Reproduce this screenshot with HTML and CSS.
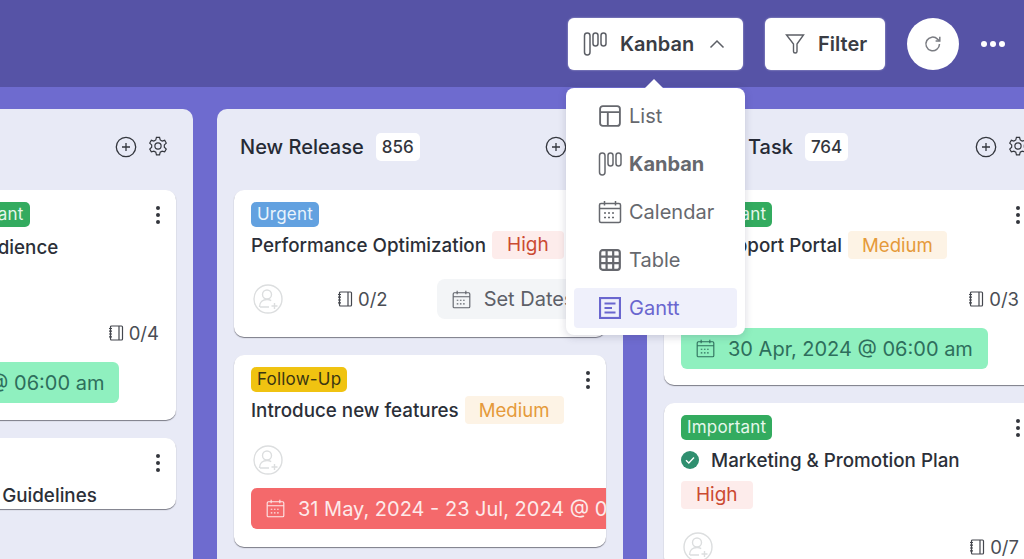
FILE: index.html
```html
<!DOCTYPE html>
<html lang="en">
<head>
    <meta charset="UTF-8">
    <meta name="viewport" content="width=device-width, initial-scale=1.0">
    <title>Project Board</title>
    <link rel="stylesheet" href="styles.css">
</head>
<body>
    <!-- shared icons -->
    <svg class="icon-defs" aria-hidden="true">
        <symbol id="i-kanban" viewBox="0 0 24 24"><rect x="1.5" y="1" width="5.5" height="22" rx="2.7"/><rect x="10" y="1" width="5" height="13" rx="2.5"/><rect x="18" y="1" width="5" height="13" rx="2.5"/></symbol>
        <symbol id="i-list" viewBox="0 0 20 20"><rect x="1" y="1" width="18" height="18" rx="2.5"/><path d="M1 6.5h18M8 6.5V19"/></symbol>
        <symbol id="i-calendar" viewBox="0 0 24 24"><rect x="1.5" y="3.5" width="21" height="19" rx="1.5"/><path d="M1.5 8.5h21M6.5 1v4.5M17.5 1v4.5"/><path class="dash" d="M6 13h12M6 17.5h12"/></symbol>
        <symbol id="i-table" viewBox="0 0 22 22"><rect x="1.2" y="1.2" width="19.6" height="19.6" rx="2.5"/><path d="M1 7.6h20M1 14.2h20M7.6 1v20M14.2 1v20"/></symbol>
        <symbol id="i-gantt" viewBox="0 0 22 22"><rect x="1" y="1" width="20" height="20"/><path d="M5.5 6.5h11M5.5 11h7.5M5.5 15.5h11"/></symbol>
        <symbol id="i-notebook" viewBox="0 0 16 16"><rect x="2.5" y="1" width="12" height="14" rx="1"/><path d="M11 1v14M1 3.5h3M1 6.2h3M1 9h3M1 11.8h3"/></symbol>
        <symbol id="i-avatar" viewBox="0 0 30 30"><circle cx="15" cy="15" r="14"/><circle cx="14" cy="10.5" r="4.5"/><path d="M6.5 23c0-5 3.5-7.5 7.5-7.5 1.6 0 3 .4 4.2 1.1M7 23h9M21.5 19v6M18.5 22h6"/></symbol>
        <symbol id="i-plus" viewBox="0 0 22 22"><circle cx="11" cy="11" r="9.7"/><path d="M11 7v8M7 11h8"/></symbol>
        <symbol id="i-gear" viewBox="0 0 24 24"><path d="M9.6 4.3 10.3 1.5h3.4l.7 2.8 2.1 1.2 2.8-.8 1.7 3-2.1 2V12.3l2.1 2-1.7 3-2.8-.8-2.1 1.2-.7 2.8h-3.4l-.7-2.8-2.1-1.2-2.8.8-1.7-3 2.1-2V9.7l-2.1-2 1.7-3 2.8.8z"/><circle cx="12" cy="11" r="3.4"/></symbol>
        <symbol id="i-dots" viewBox="0 0 6 20"><circle cx="3" cy="3" r="2"/><circle cx="3" cy="10" r="2"/><circle cx="3" cy="17" r="2"/></symbol>
    </svg>

    <header class="topbar">
        <button class="top-btn view-btn">
            <svg class="icon icon-kanban-lg"><use href="#i-kanban"/></svg>
            <span>Kanban</span>
            <svg class="chevron" viewBox="0 0 16 10"><path d="M1.5 8.5 8 2l6.5 6.5"/></svg>
        </button>
        <button class="top-btn filter-btn">
            <svg class="funnel" viewBox="0 0 20 22"><path d="M1.5 2h17l-6.5 9v7.5c0 2-3.5 2-3.5 0V11z"/></svg>
            <span>Filter</span>
        </button>
        <button class="round-btn">
            <svg class="refresh" viewBox="0 0 20 20"><path d="M16.5 10a6.8 6.8 0 1 1-2-4.9L16.5 7"/><path d="M16.8 2.8V7h-4.2"/></svg>
        </button>
        <div class="more"><i></i><i></i><i></i></div>

        <div class="view-menu">
            <div class="menu-item"><svg class="icon menu-icon"><use href="#i-list"/></svg>List</div>
            <div class="menu-item bold"><svg class="icon menu-icon-lg"><use href="#i-kanban"/></svg>Kanban</div>
            <div class="menu-item"><svg class="icon menu-icon-lg"><use href="#i-calendar"/></svg>Calendar</div>
            <div class="menu-item"><svg class="icon menu-icon heavy"><use href="#i-table"/></svg>Table</div>
            <div class="menu-item active"><svg class="icon menu-icon heavy"><use href="#i-gantt"/></svg>Gantt</div>
        </div>
    </header>

    <main class="board">
        <section class="column">
            <div class="column-head">
                <h2>Discovery</h2><span class="count">412</span>
                <div class="column-actions">
                    <svg class="icon col-icon"><use href="#i-plus"/></svg>
                    <svg class="icon col-icon"><use href="#i-gear"/></svg>
                </div>
            </div>
            <article class="card card-a">
                <svg class="card-menu"><use href="#i-dots"/></svg>
                <div class="tags"><span class="tag yellow">Follow-Up</span><span class="tag green">Important</span></div>
                <div class="title-row low"><span class="title">Know the Target Audience</span></div>
                <div class="spacer"></div>
                <div class="meta-row">
                    <svg class="icon avatar"><use href="#i-avatar"/></svg>
                    <span class="subtasks"><svg class="icon note"><use href="#i-notebook"/></svg>0/4</span>
                </div>
                <div class="date-chip mint"><svg class="icon cal"><use href="#i-calendar"/></svg>10 Jul, 2024 @ 06:00 am</div>
            </article>
            <article class="card">
                <svg class="card-menu"><use href="#i-dots"/></svg>
                <div class="tags"><span class="tag blue">Urgent</span></div>
                <div class="title-row low"><span class="title">Brand Voice &amp; Style Guidelines</span></div>
            </article>
        </section>

        <section class="column">
            <div class="column-head">
                <h2>New Release</h2><span class="count">856</span>
                <div class="column-actions">
                    <svg class="icon col-icon"><use href="#i-plus"/></svg>
                    <svg class="icon col-icon"><use href="#i-gear"/></svg>
                </div>
            </div>
            <article class="card card-b">
                <svg class="card-menu"><use href="#i-dots"/></svg>
                <div class="tags"><span class="tag blue">Urgent</span></div>
                <div class="title-row"><span class="title">Performance Optimization</span><span class="priority high">High</span></div>
                <div class="meta-row first-meta packed">
                    <svg class="icon avatar"><use href="#i-avatar"/></svg>
                    <span class="subtasks mid"><svg class="icon note"><use href="#i-notebook"/></svg>0/2</span>
                    <span class="set-dates"><svg class="icon cal"><use href="#i-calendar"/></svg>Set Dates</span>
                </div>
            </article>
            <article class="card card-c">
                <svg class="card-menu"><use href="#i-dots"/></svg>
                <div class="tags"><span class="tag yellow">Follow-Up</span></div>
                <div class="title-row"><span class="title">Introduce new features</span><span class="priority medium">Medium</span></div>
                <div class="meta-row avatar-only">
                    <svg class="icon avatar"><use href="#i-avatar"/></svg>
                </div>
                <div class="date-chip red"><svg class="icon cal"><use href="#i-calendar"/></svg>31 May, 2024 - 23 Jul, 2024 @ 06:00 am</div>
            </article>
        </section>

        <section class="column">
            <div class="column-head">
                <h2>Current Task</h2><span class="count">764</span>
                <div class="column-actions">
                    <svg class="icon col-icon"><use href="#i-plus"/></svg>
                    <svg class="icon col-icon"><use href="#i-gear"/></svg>
                </div>
            </div>
            <article class="card card-d">
                <svg class="card-menu"><use href="#i-dots"/></svg>
                <div class="tags"><span class="tag green">Important</span></div>
                <div class="title-row"><span class="title">Fix Support Portal</span><span class="priority medium">Medium</span></div>
                <div class="meta-row first-meta">
                    <svg class="icon avatar"><use href="#i-avatar"/></svg>
                    <span class="subtasks"><svg class="icon note"><use href="#i-notebook"/></svg>0/3</span>
                </div>
                <div class="date-chip mint"><svg class="icon cal"><use href="#i-calendar"/></svg>30 Apr, 2024 @ 06:00 am</div>
            </article>
            <article class="card">
                <svg class="card-menu"><use href="#i-dots"/></svg>
                <div class="tags"><span class="tag green">Important</span></div>
                <div class="title-row low">
                    <svg class="check" viewBox="0 0 18 18"><circle cx="9" cy="9" r="9"/><path d="M5 9.3l2.8 2.6L13 6.6"/></svg>
                    <span class="title">Marketing &amp; Promotion Plan</span>
                </div>
                <div class="title-row"><span class="priority high solo">High</span></div>
                <div class="meta-row last-meta">
                    <svg class="icon avatar"><use href="#i-avatar"/></svg>
                    <span class="subtasks"><svg class="icon note"><use href="#i-notebook"/></svg>0/7</span>
                </div>
            </article>
        </section>
    </main>
</body>
</html>
```

FILE: styles.css
```css
* {
    box-sizing: border-box;
}
html, body {
    height: 100%;
}
body {
    margin: 0;
    overflow: hidden;
    font-family: Inter, "Noto Sans", sans-serif;
    background-color: #6e6bcf;
    color: #2b2f38;
}
.icon-defs {
    display: none;
}
.icon {
    fill: none;
    stroke: currentColor;
    stroke-width: 1.5;
    flex-shrink: 0;
}

/* top bar */
.topbar {
    position: relative;
    display: flex;
    align-items: center;
    justify-content: flex-end;
    height: 87px;
    padding-right: 19px;
    background-color: #5653a6;
}
.top-btn {
    display: flex;
    align-items: center;
    height: 52px;
    background-color: white;
    border: none;
    border-radius: 6px;
    font-family: inherit;
    font-size: 20px;
    font-weight: 600;
    color: #3a3d44;
    box-shadow: 0 0 2px rgba(255,255,255,0.6);
}
.view-btn {
    width: 175px;
    padding: 0 0 0 15px;
}
.icon-kanban-lg {
    width: 24px;
    height: 24px;
    color: #5c5f66;
    margin-right: 13px;
}
.chevron {
    width: 16px;
    height: 10px;
    margin-left: 15px;
    fill: none;
    stroke: #5c5f66;
    stroke-width: 1.5;
}
.filter-btn {
    width: 120px;
    margin-left: 22px;
    padding: 0 0 0 20px;
}
.funnel {
    width: 20px;
    height: 22px;
    margin-right: 13px;
    fill: none;
    stroke: #5c5f66;
    stroke-width: 1.4;
}
.round-btn {
    display: flex;
    align-items: center;
    justify-content: center;
    width: 52px;
    height: 52px;
    margin-left: 22px;
    background-color: white;
    border: none;
    border-radius: 50%;
}
.refresh {
    width: 20px;
    height: 20px;
    fill: none;
    stroke: #7a7c82;
    stroke-width: 1.5;
}
.more {
    display: flex;
    gap: 3px;
    margin-left: 22px;
}
.more i {
    width: 6px;
    height: 6px;
    border-radius: 50%;
    background-color: white;
}

/* view dropdown */
.view-menu {
    position: absolute;
    top: 88px;
    left: 566px;
    z-index: 5;
    width: 179px;
    height: 247px;
    padding: 4px 8px 7px;
    background-color: white;
    border-radius: 8px;
    box-shadow: 0 2px 8px rgba(40,40,80,0.18);
}
.view-menu::before {
    content: "";
    position: absolute;
    top: -9px;
    left: 79px;
    border-left: 9px solid transparent;
    border-right: 9px solid transparent;
    border-bottom: 9px solid white;
}
.menu-item {
    display: flex;
    align-items: center;
    height: 48px;
    padding-left: 25px;
    font-size: 20px;
    color: #66686e;
    border-radius: 4px;
}
.menu-item.bold {
    font-weight: 700;
}
.menu-item.active {
    height: 40px;
    margin-top: 4px;
    background-color: #eff0fb;
    color: #6a66cf;
}
.menu-icon {
    width: 22px;
    height: 22px;
    margin-right: 8px;
    stroke-width: 1.7;
}
.menu-icon.heavy {
    stroke-width: 2.2;
}
.menu-icon-lg {
    width: 24px;
    height: 24px;
    margin: 0 7px 0 -1px;
}
.dash {
    stroke-dasharray: 2 2;
}

/* board */
.board {
    display: flex;
    gap: 24px;
    margin-left: -213px;
    padding-top: 22px;
}
.column {
    flex: 0 0 406px;
    min-width: 0;
    height: 520px;
    padding: 0 17px;
    background-color: #e8eaf6;
    border-radius: 10px;
}
.column-head {
    display: flex;
    align-items: center;
    height: 81px;
    padding: 0 6px 6px;
}
.column-head h2 {
    margin: 0;
    font-size: 20px;
    font-weight: 500;
    color: #262a35;
}
.count {
    margin-left: 12px;
    padding: 4px 6px;
    background-color: white;
    border-radius: 5px;
    font-size: 17px;
    font-weight: 500;
    color: #33363d;
}
.column-actions {
    display: flex;
    gap: 10px;
    margin-left: auto;
    margin-right: 1px;
}
.col-icon {
    width: 22px;
    height: 22px;
    color: #33363d;
    stroke-width: 1.3;
}

/* cards */
.card {
    position: relative;
    display: flow-root;
    overflow: hidden;
    margin-bottom: 18px;
    padding: 12px 17px 0;
    background-color: white;
    border-radius: 10px;
    box-shadow: 0 1px 1px rgba(50,50,60,0.6);
}
.card-a {
    height: 230px;
}
.card-b {
    height: 147px;
}
.card-c {
    height: 192px;
}
.card-d {
    height: 195px;
}
.card-menu {
    position: absolute;
    top: 15px;
    right: 15px;
    width: 6px;
    height: 20px;
    fill: #33363d;
}
.tags {
    display: flex;
    gap: 21px;
}
.tag {
    height: 25px;
    padding: 0 6px;
    border-radius: 5px;
    font-size: 17px;
    line-height: 25px;
    letter-spacing: 0.2px;
}
.tag.blue {
    background-color: #62a1e0;
    color: #e9f3fc;
}
.tag.green {
    background-color: #33ab5f;
    color: #e6f7ec;
}
.tag.yellow {
    background-color: #f0c311;
    color: #3a3512;
}
.title-row {
    display: flex;
    align-items: center;
    min-height: 28px;
    margin-top: 4px;
}
.title-row.low {
    margin-top: 6px;
}
.title {
    font-size: 18.8px;
    font-weight: 500;
    color: #2b2f38;
    white-space: nowrap;
}
.priority {
    height: 28px;
    margin-left: 6px;
    padding: 0 15px;
    border-radius: 4px;
    font-size: 19px;
    line-height: 28px;
}
.priority.high {
    background-color: #fdeceb;
    color: #cb4a32;
}
.priority.medium {
    padding: 0 14px;
    background-color: #fdf3e5;
    color: #e59a3a;
    font-size: 18.6px;
}
.priority.solo {
    margin-left: 0;
    margin-top: 3px;
}
.check {
    width: 18px;
    height: 18px;
    margin-right: 12px;
    fill: #2f8f6f;
    stroke: white;
    stroke-width: 1.4;
    flex-shrink: 0;
}
.check circle {
    stroke: none;
}
.meta-row {
    display: flex;
    align-items: center;
    justify-content: space-between;
    height: 40px;
    padding-left: 2px;
}
.meta-row.packed {
    justify-content: flex-start;
}
.first-meta {
    margin-top: 20px;
}
.last-meta {
    margin-top: 18px;
}
.avatar-only {
    margin-top: 21px;
    height: 30px;
}
.spacer {
    height: 52px;
}
.avatar {
    width: 30px;
    height: 30px;
    color: #dcdedf;
    stroke-width: 1.4;
}
.subtasks {
    display: flex;
    align-items: center;
    gap: 5px;
    font-size: 18.5px;
    color: #4a4d54;
}
.subtasks.mid {
    margin-left: 54px;
}
.note {
    width: 16px;
    height: 16px;
    color: #44474e;
    stroke-width: 1.2;
}
.set-dates {
    display: flex;
    align-items: center;
    flex-shrink: 0;
    width: 200px;
    height: 40px;
    margin-left: 49px;
    padding-left: 15px;
    background-color: #f3f5f7;
    border-radius: 8px;
    font-size: 20px;
    color: #5d6068;
    white-space: nowrap;
}
.date-chip {
    display: flex;
    align-items: center;
    width: max-content;
    height: 41px;
    margin-top: 9px;
    padding: 0 15px;
    border-radius: 6px;
    font-size: 20px;
    white-space: nowrap;
}
.date-chip.mint {
    background-color: #8ff0bf;
    color: #2e6e5c;
}
.date-chip.red {
    margin-top: 13px;
    background-color: #f4696b;
    color: #fdeaea;
}
.cal {
    width: 19px;
    height: 19px;
    margin-right: 13px;
    stroke-width: 1.4;
}
```
